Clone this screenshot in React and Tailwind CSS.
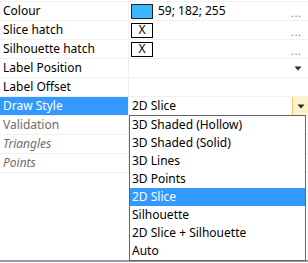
import React from 'react';

const rows = [
  { label: 'Colour', kind: 'colour' },
  { label: 'Slice hatch', kind: 'check' },
  { label: 'Silhouette hatch', kind: 'check' },
  { label: 'Label Position', kind: 'combo' },
  { label: 'Label Offset', kind: 'empty' },
  { label: 'Draw Style', kind: 'active' },
  { label: 'Validation', kind: 'muted' },
  { label: 'Triangles', kind: 'italic' },
  { label: 'Points', kind: 'italic' },
];

const options = [
  '3D Shaded (Hollow)',
  '3D Shaded (Solid)',
  '3D Lines',
  '3D Points',
  '2D Slice',
  'Silhouette',
  '2D Slice + Silhouette',
  'Auto',
];

function Arrow() {
  return (
    <svg width="8" height="5" viewBox="0 0 8 5">
      <path d="M0.5 0.5 H7.5 L4 4.5 Z" fill="#262b33" />
    </svg>
  );
}

function Dots() {
  return <span className="ml-auto mr-[6px] self-end pb-[2px] text-[10px] leading-[10px] tracking-[1px] text-[#707070]">...</span>;
}

function Value({ kind }) {
  if (kind === 'colour') {
    return (
      <div className="flex h-full items-center">
        <div className="ml-[2px] h-[15px] w-[22px] border border-[#222] bg-[#3bb6ff]" />
        <span className="ml-[5px]">59; 182; 255</span>
        <Dots />
      </div>
    );
  }
  if (kind === 'check') {
    return (
      <div className="flex h-full items-center">
        <div className="ml-[2px] flex h-[15px] w-[22px] items-center justify-center border border-black bg-white text-[12px]">X</div>
        <Dots />
      </div>
    );
  }
  if (kind === 'combo') {
    return (
      <div className="flex h-full items-center justify-end pr-[6px]">
        <Arrow />
      </div>
    );
  }
  if (kind === 'active') {
    return (
      <div className="flex h-full items-center">
        <span className="ml-[3px]">2D Slice</span>
        <div className="ml-auto flex h-full w-[16px] items-center justify-center border-l border-[#e8c766] bg-[#fdf3c8]">
          <Arrow />
        </div>
      </div>
    );
  }
  return null;
}

export default function App() {
  return (
    <div className="relative h-[263px] w-[308px] overflow-hidden bg-white text-[12px] text-black" style={{ fontFamily: '"Noto Sans", sans-serif' }}>
      <div className="flex h-[260px] flex-col pt-[1px]">
        <div className="h-[1px] w-full bg-[#f0f0f0]" />
        {rows.map((r) => {
          const active = r.kind === 'active';
          const labelCls = active
            ? 'bg-[#3399ff] text-white'
            : r.kind === 'muted'
            ? 'text-[#6d6d6d]'
            : r.kind === 'italic'
            ? 'italic text-[#6d6d6d]'
            : '';
          return (
            <div key={r.label} className="flex h-[19px] border-b border-[#f0f0f0]">
              <div className={`flex w-[128px] items-center pl-[3px] leading-none ${labelCls}`}>{r.label}</div>
              <div className="w-[1px] bg-[#f0f0f0]" />
              <div className="min-w-0 flex-1 leading-none">
                <Value kind={r.kind} />
              </div>
            </div>
          );
        })}
        <div className="flex-1" />
      </div>
      <div className="h-[2px] w-full bg-[#8f9bab]" />

      <div className="absolute left-[129px] top-[115px] w-[177px] border border-[#646464] bg-white">
        {options.map((o) => (
          <div
            key={o}
            className={`flex h-[18px] items-center pl-[2px] leading-none ${o === '2D Slice' ? 'bg-[#3399ff] text-white' : ''}`}
          >
            {o}
          </div>
        ))}
      </div>
    </div>
  );
}
